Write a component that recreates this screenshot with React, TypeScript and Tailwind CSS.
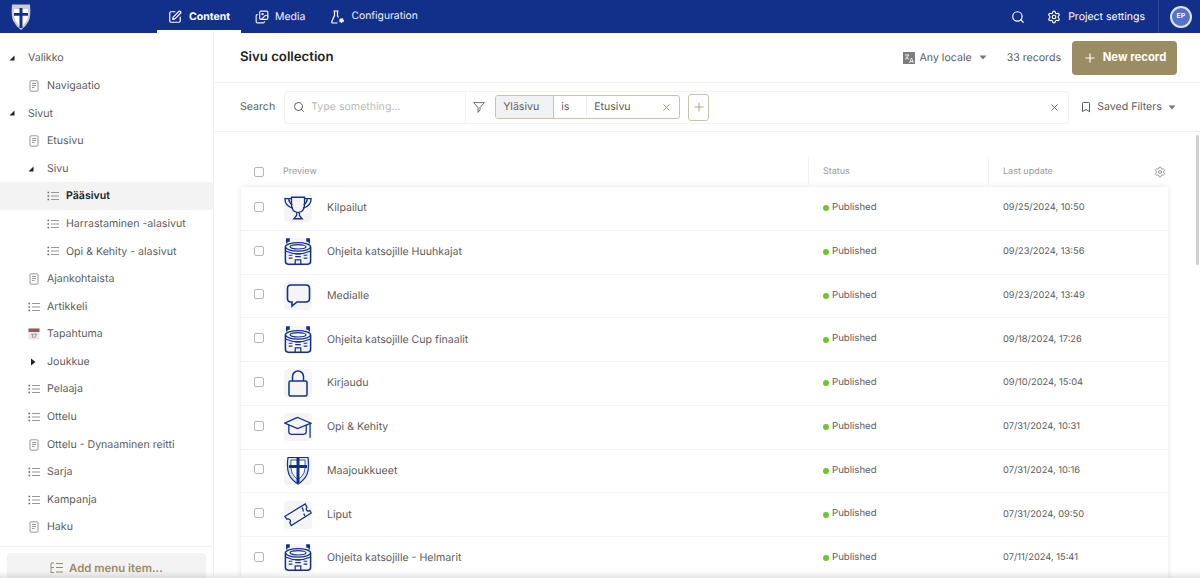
import { Bookmark, Plus, Search, Settings, SquarePen, X, Images } from 'lucide-react'

const NAVY = '#12308a'

function DocIcon() {
  return (
    <svg width="10" height="12" viewBox="0 0 10 12" fill="none" stroke="#8a8a8a" strokeWidth="0.9" className="shrink-0">
      <rect x="1" y="0.8" width="8" height="10.4" rx="1" />
      <path d="M3 3.5h4M3 5.5h4M3 7.5h2.5" />
    </svg>
  )
}

function ListIcon() {
  return (
    <svg width="12" height="10" viewBox="0 0 12 10" fill="none" stroke="#8a8a8a" strokeWidth="0.9" className="shrink-0">
      <path d="M4 1.5h8M4 5h8M4 8.5h8" />
      <path d="M0.5 1.5h1.6M0.5 5h1.6M0.5 8.5h1.6" strokeWidth="1.5" stroke="#666" />
    </svg>
  )
}

function AddMenuIcon() {
  return (
    <svg width="13" height="12" viewBox="0 0 13 12" fill="none" stroke="#9a8c63" strokeWidth="1" className="shrink-0">
      <path d="M1 1v10M1 1h3M1 5.500h3M1 10.500h3M6 1.500h7M6 5.500h7M6 10h7" />
    </svg>
  )
}

function CalendarIcon() {
  return (
    <svg width="12" height="12" viewBox="0 0 12 12" className="shrink-0">
      <rect x="0.5" y="0.5" width="11" height="11" fill="#e8e8e8" />
      <rect x="0.5" y="0.5" width="11" height="3.5" fill="#8f5a5a" />
      <text x="6" y="10" textAnchor="middle" fontSize="6" fill="#555" fontFamily="Inter, sans-serif">17</text>
    </svg>
  )
}

function Caret({ open = true }: { open?: boolean }) {
  if (!open) {
    return (
      <svg width="6" height="8" viewBox="0 0 6 8" className="shrink-0"><path d="M1 0.5 5.5 4 1 7.5z" fill="#222" /></svg>
    )
  }
  return (
    <svg width="6" height="6" viewBox="0 0 6 6" className="shrink-0"><path d="M5.5 0.5v5H0.5z" fill="#222" /></svg>
  )
}

function DropCaret() {
  return (
    <svg width="8" height="5" viewBox="0 0 8 5" className="shrink-0"><path d="M0.500 0.500h7L4 4.500z" fill="#777" /></svg>
  )
}

function LocaleIcon() {
  return (
    <svg width="12" height="12" viewBox="0 0 12 12" className="shrink-0">
      <rect width="12" height="12" fill="#7d7d7d" />
      <path d="M2 3h4M4 2v1M5.500 3Q5 6 2 7.500M3 4.500Q4 6.500 6 7.500" stroke="#fff" strokeWidth="0.8" fill="none" />
      <path d="M6.500 11 8.500 6l2 5M7.200 9.500h2.600" stroke="#fff" strokeWidth="0.8" fill="none" />
    </svg>
  )
}

function FlaskGear() {
  return (
    <svg width="14" height="14" viewBox="0 0 14 14" fill="none" stroke="#fff" strokeWidth="1.2" className="shrink-0">
      <path d="M2.500 1h5M3.500 1v4.500L.8 11.500q-.4 1.500 1 1.500h4.700M6.500 1v4.500l.8 2" />
      <circle cx="10.500" cy="10.500" r="1.700" fill="#fff" strokeWidth="1.400" strokeDasharray="1.200 .6" />
    </svg>
  )
}

function Filter12() {
  return (
    <svg width="12" height="11" viewBox="0 0 12 11" fill="none" stroke="#5c5c5c" strokeWidth="0.9" className="shrink-0">
      <path d="M.6.6h10.800L7 5.500V8L5 10.400V5.500z" />
    </svg>
  )
}

function Stadium() {
  return (
    <svg width="30" height="30" viewBox="0 0 30 30" fill="none" stroke={NAVY} strokeWidth="1.3">
      <path d="M3 1v5M27 1v5" strokeWidth="1.6" />
      <path d="M3 1h2.500v2.500H3zM24.500 1H27v2.500h-2.500z" fill={NAVY} />
      <ellipse cx="15" cy="9.500" rx="13.500" ry="4.500" />
      <ellipse cx="15" cy="9.500" rx="8.500" ry="2.300" />
      <path d="M1.500 9.500V25q0 3 3 3h21q3 0 3-3V9.500" strokeWidth="1.600" />
      <path d="M1.500 14q13.500 6 27 0" />
      <path d="M5 18.500h4M5 21.500h4M21 18.500h4M21 21.500h4M12 17h6M12 20h6" />
      <path d="M12 28v-4.500h6V28" />
    </svg>
  )
}

function Thumb({ kind }: { kind: string }) {
  return (
    <div className="flex h-7 w-7 shrink-0 items-center justify-center rounded-sm bg-[#f5f5f5]">
      {kind === 'trophy' && (
        <svg width="30" height="26" viewBox="0 0 30 26" fill="none" stroke={NAVY} strokeWidth="1.4">
          <path d="M8 1.500h14V9q0 8-7 9-7-1-7-9z" />
          <path d="M8 3H1q0 8 8.500 10M22 3h7q0 8-8.500 10" />
          <path d="M5 3.500q.5 4 4 6M25 3.500q-.5 4-4 6" />
          <path d="M13.500 18v3l-3 3.500h9l-3-3.500v-3" />
        </svg>
      )}
      {kind === 'stadium' && <Stadium />}
      {kind === 'speech' && (
        <svg width="25" height="26" viewBox="0 0 25 26" fill="none" stroke={NAVY} strokeWidth="1.6">
          <path d="M5 2h15q3.500 0 3.500 3.500v10q0 3.500-3.500 3.500H11l-5 4v-4H5q-3.500 0-3.500-3.500v-10Q1.500 2 5 2z" />
        </svg>
      )}
      {kind === 'lock' && (
        <svg width="20" height="28" viewBox="0 0 20 28" fill="none" stroke={NAVY} strokeWidth="1.5">
          <path d="M4.500 12V7.500a5.500 5.500 0 0 1 11 0V12" />
          <rect x="1" y="12" width="18" height="15" rx="1.500" />
        </svg>
      )}
      {kind === 'cap' && (
        <svg width="29" height="23" viewBox="0 0 29 23" fill="none" stroke={NAVY} strokeWidth="1.3">
          <path d="M14 1 .8 7 14 12.500 28 7z" />
          <path d="M5 9v7q0 2.500 2.500 2.500h13q2.500 0 2.500-2.500V9" />
          <path d="M27 7.500V22" />
        </svg>
      )}
      {kind === 'shield' && (
        <svg width="24" height="29" viewBox="0 0 24 29" fill="none">
          <path d="M2 1.500h20q1.500 10-1 17-3 6-9 9.500-6-3.500-9-9.500-2.500-7-1-17z" fill="#dfe4f2" stroke={NAVY} strokeWidth="1.2" />
          <path d="M5 4h14q.8 8-1 13-2.500 4-6 7-3.500-3-6-7-1.800-5-1-13z" fill="#fff" stroke={NAVY} strokeWidth="0.8" />
          <path d="M10.500 2h3v25h-3zM3 9h18v3H3z" fill={NAVY} />
        </svg>
      )}
      {kind === 'ticket' && (
        <svg width="29" height="25" viewBox="0 0 29 25" fill="none" stroke={NAVY} strokeWidth="1.3">
          <path d="M.8 14.500 22 1.500l1.800 3.500q-1.500 2 0 3.500 1.500 1 3-.2l1.400 2.700L7.500 24l-1.500-3q1.500-2 0-3.200-1.500-1.300-3-.4z" />
          <path d="M18.500 5q1.500 2 1.500 4.500" />
          <path d="M20.500 11.500 21.500 14" />
        </svg>
      )}
    </div>
  )
}

const nav = [
  { label: 'Valikko', caret: true, level: 0 },
  { label: 'Navigaatio', icon: 'doc', level: 1 },
  { label: 'Sivut', caret: true, level: 0 },
  { label: 'Etusivu', icon: 'doc', level: 1 },
  { label: 'Sivu', caret: true, level: 1 },
  { label: 'Pääsivut', icon: 'list', level: 2, active: true },
  { label: 'Harrastaminen -alasivut', icon: 'list', level: 2 },
  { label: 'Opi & Kehity - alasivut', icon: 'list', level: 2 },
  { label: 'Ajankohtaista', icon: 'doc', level: 1 },
  { label: 'Artikkeli', icon: 'list', level: 1 },
  { label: 'Tapahtuma', icon: 'cal', level: 1 },
  { label: 'Joukkue', caret: 'closed', level: 1 },
  { label: 'Pelaaja', icon: 'list', level: 1 },
  { label: 'Ottelu', icon: 'list', level: 1 },
  { label: 'Ottelu - Dynaaminen reitti', icon: 'doc', level: 1 },
  { label: 'Sarja', icon: 'list', level: 1 },
  { label: 'Kampanja', icon: 'list', level: 1 },
  { label: 'Haku', icon: 'doc', level: 1 },
]

const records = [
  { thumb: 'trophy', title: 'Kilpailut', date: '09/25/2024, 10:50' },
  { thumb: 'stadium', title: 'Ohjeita katsojille Huuhkajat', date: '09/23/2024, 13:56' },
  { thumb: 'speech', title: 'Medialle', date: '09/23/2024, 13:49' },
  { thumb: 'stadium', title: 'Ohjeita katsojille Cup finaalit', date: '09/18/2024, 17:26' },
  { thumb: 'lock', title: 'Kirjaudu', date: '09/10/2024, 15:04' },
  { thumb: 'cap', title: 'Opi & Kehity', date: '07/31/2024, 10:31' },
  { thumb: 'shield', title: 'Maajoukkueet', date: '07/31/2024, 10:16' },
  { thumb: 'ticket', title: 'Liput', date: '07/31/2024, 09:50' },
  { thumb: 'stadium', title: 'Ohjeita katsojille - Helmarit', date: '07/11/2024, 15:41' },
]

function Checkbox() {
  return <div className="h-2.5 w-2.5 shrink-0 rounded-[2px] border border-[#b5b5b5] bg-white" />
}

function SideRow({ item }: { item: (typeof nav)[number] }) {
  const left = ['pl-[9px]', 'pl-[28px]', 'pl-[47px]'][item.level]
  return (
    <div className={`flex h-[27.6px] items-center ${left} ${item.active ? 'bg-[#f3f3f3] font-semibold text-[#222]' : 'text-[#5c5c5c]'}`}>
      <span className="flex w-[19px] shrink-0 items-center">
        {item.caret === true && <Caret />}
        {item.caret === 'closed' && <span className="pl-[2px]"><Caret open={false} /></span>}
        {item.icon === 'doc' && <span className="pl-px"><DocIcon /></span>}
        {item.icon === 'list' && <ListIcon />}
        {item.icon === 'cal' && <CalendarIcon />}
      </span>
      <span>{item.label}</span>
    </div>
  )
}

export default function App() {
  return (
    <div className="relative flex h-[578px] w-[1200px] flex-col overflow-hidden bg-white font-['Inter',sans-serif] text-[10.6px] text-[#5c5c5c] [text-rendering:geometricPrecision]">
      {/* Top bar */}
      <header className="flex h-[33px] shrink-0 items-stretch bg-[#12308a] text-[10.5px] text-white">
        <div className="flex w-[157px] items-center pl-[11px]">
          <svg width="20" height="28" viewBox="0 0 20 28">
            <path d="M1 1.500h18q1 11-1 16-3 6-8 9.500-5-3.500-8-9.500-2-5-1-16z" fill="#c9ccd4" />
            <path d="M3 6h14q.5 7-1 11-2.500 4.500-6 7.500-3.500-3-6-7.500-1.500-4-1-11z" fill="#fff" />
            <path d="M8.500 5h3v20h-3zM3 10h14v2.800H3z" fill="#12308a" />
          </svg>
        </div>
        <div className="flex h-full w-[84px] items-center justify-center gap-[7px] border-b-[3px] border-white pt-[3px] font-bold">
          <SquarePen size={14} />
          <span>Content</span>
        </div>
        <div className="ml-[14px] flex items-center gap-[6px] text-[#f0f2f8]">
          <Images size={14} />
          <span>Media</span>
        </div>
        <div className="ml-[26px] flex items-center gap-[6px] text-[#f0f2f8]">
          <FlaskGear />
          <span className="text-[10.3px]">Configuration</span>
        </div>
        <div className="ml-auto flex items-center">
          <Search size={14} />
          <Settings size={14} className="ml-[22px]" />
          <span className="ml-[7px]">Project settings</span>
          <div className="ml-[13px] flex h-full items-center border-l border-[#2c4796] pl-[11px] pr-[8px]">
            <div className="flex h-[22px] w-[22px] items-center justify-center rounded-full border-2 border-[#dfe4f4] bg-[#5673c8] text-[7px] font-semibold">EP</div>
          </div>
        </div>
      </header>

      <div className="flex min-h-0 flex-1">
        {/* Sidebar */}
        <aside className="flex w-[214px] shrink-0 flex-col border-r border-[#f0f0f0]">
          <div className="flex-1 pt-[11.500px]">
            {nav.map((item) => (
              <SideRow key={item.label} item={item} />
            ))}
          </div>
          <div className="h-[32px] shrink-0 border-t border-[#f0f0f0] px-[7px] pt-[6px]">
            <div className="flex h-10 items-start justify-center gap-[6px] rounded-sm bg-[#f3f3f3] pt-[9px] text-[11.4px] font-semibold text-[#9a8c63]">
              <AddMenuIcon />
              <span className="leading-3">Add menu item...</span>
            </div>
          </div>
        </aside>

        {/* Main */}
        <main className="relative min-w-0 flex-1">
          <div className="flex h-[50px] items-center border-b border-[#f2f2f2] pl-[26px] pr-[23px]">
            <h1 className="pt-px text-[13.200px] font-semibold text-[#222]">Sivu collection</h1>
            <div className="ml-auto flex items-center">
              <LocaleIcon />
              <span className="ml-[5px]">Any locale</span>
              <span className="ml-[7px]"><DropCaret /></span>
              <span className="ml-[20px]">33 records</span>
              <button className="ml-[11px] flex h-[34px] w-[105px] items-center justify-center gap-[6px] rounded-sm bg-[#9a8c63] text-[11.300px] font-bold text-white">
                <Plus size={14} />
                New record
              </button>
            </div>
          </div>

          <div className="flex h-[49px] items-center border-b border-[#f2f2f2] pl-[26px] pr-[23px]">
            <span>Search</span>
            <div className="ml-[9px] flex h-[33px] w-[785px] shrink-0 items-center rounded-sm border border-[#f2f2f2]">
              <Search size={12} className="ml-2" />
              <span className="ml-[6px] w-[154px] text-[#bbb]">Type something...</span>
              <div className="flex h-full items-center border-l border-[#f2f2f2] pl-[7px]">
                <Filter12 />
              </div>
              <div className="ml-[10px] flex h-6 w-[185px] items-stretch overflow-hidden rounded-[3px] border border-[#c9c3ae]">
                <div className="flex w-[58px] items-center border-r border-[#c9c3ae] bg-[#f1f2f4] pl-[7px]">Yläsivu</div>
                <div className="flex w-[33px] items-center border-r border-[#f0f0f0] pl-[7px]">is</div>
                <div className="flex flex-1 items-center pl-[7px]">
                  Etusivu
                  <X size={11} className="ml-auto mr-[7px] text-[#9a8c63]" />
                </div>
              </div>
              <div className="ml-[8px] flex h-[27px] w-[21px] items-center justify-center rounded-[3px] border border-[#c9c3ae] text-[#9a8c63]">
                <Plus size={14} strokeWidth={1.3} />
              </div>
              <X size={11} className="ml-auto mr-[8px]" />
            </div>
            <Bookmark size={12} className="ml-[11px] shrink-0" />
            <span className="ml-[5px] whitespace-nowrap">Saved Filters</span>
            <span className="ml-[6px]"><DropCaret /></span>
          </div>

          <div className="ml-[27px] mr-[32px]">
            <div className="mt-[25px] flex h-[30px] items-center text-[9px] text-[#999]">
              <span className="flex w-[42px] pl-[13px]"><Checkbox /></span>
              <span className="w-[525px]">Preview</span>
              <span className="flex h-full w-[180px] items-center border-l border-[#f2f2f2] pl-[14px]">Status</span>
              <span className="flex h-full flex-1 items-center border-l border-[#f2f2f2] pl-[14px]">Last update</span>
              <Settings size={12} className="mr-[2px]" />
            </div>
            <div className="shadow-[0_0_6px_rgba(0,0,0,0.1)]">
              {records.map((r) => (
                <div key={r.title + r.date} className="flex h-[43.75px] items-center border-b border-[#f4f4f4]">
                  <span className="mb-[3px] flex w-[43px] shrink-0 pl-[13px]"><Checkbox /></span>
                  <Thumb kind={r.thumb} />
                  <span className="ml-[15px] w-[496px] shrink-0">{r.title}</span>
                  <span className="flex w-[180px] shrink-0 items-center gap-[3px] text-[9.6px]">
                    <span className="h-[6px] w-[6px] rounded-full bg-[#6cc72b]" />
                    Published
                  </span>
                  <span className="text-[9.300px]">{r.date}</span>
                </div>
              ))}
            </div>
          </div>

          {/* Scrollbar */}
          <div className="absolute right-[1px] top-[102px] h-[130px] w-[3px] rounded-full bg-[#cfcfcf]" />
        </main>
      </div>

      {/* Fade along the bottom edge of the window */}
      <div className="absolute inset-x-0 bottom-0 h-[7px] bg-gradient-to-b from-transparent to-black/10" />
    </div>
  )
}
